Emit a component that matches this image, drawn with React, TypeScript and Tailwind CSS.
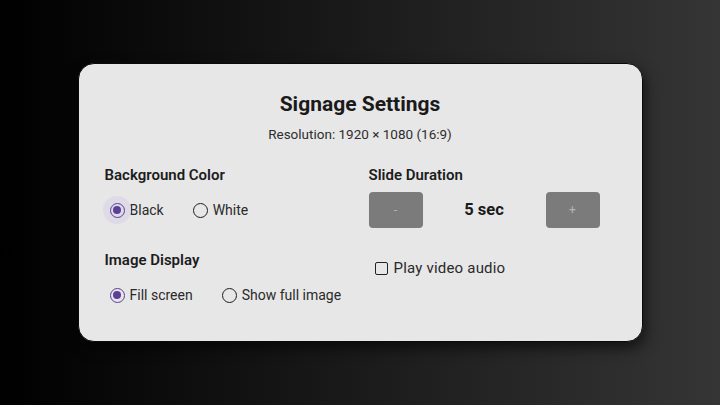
import React from "react";

function Radio({ checked, label, halo }: { checked: boolean; label: string; halo?: boolean }) {
  return (
    <div className="flex items-center">
      <div className="relative flex h-[15px] w-[15px] items-center justify-center">
        {halo && <div className="absolute left-1/2 top-1/2 h-[28px] w-[28px] -translate-x-1/2 -translate-y-1/2 rounded-full bg-[#dedae6]" />}
        <div
          className={
            checked
              ? "relative flex h-[15px] w-[15px] items-center justify-center rounded-full border-[1.5px] border-[#5b3f99]"
              : "relative h-[15px] w-[15px] rounded-full border-[1.5px] border-[#1e1e1e]"
          }
        >
          {checked && <div className="h-[8px] w-[8px] rounded-full bg-[#5b3f99]" />}
        </div>
      </div>
      <span className="ml-[5px] text-[14px] text-[#2a2a2a]">{label}</span>
    </div>
  );
}

export default function App() {
  return (
    <div
      className="flex h-[405px] w-[720px] items-center justify-center bg-[linear-gradient(to_right,#000000,#353535)]"
      style={{ fontFamily: "Roboto, 'Liberation Sans', sans-serif" }}
    >
      <div className="box-border h-[279px] w-[565px] rounded-[16px] border border-[#0a0a0a] bg-[#e7e7e7] px-[26px] pt-[26px] shadow-[2px_6px_14px_rgba(0,0,0,0.6)]">
        <div className="flex flex-col items-center">
          <div className="text-[21px] font-bold leading-[28px] text-[#1a1a1a]">Signage Settings</div>
          <div className="mt-[6px] text-[13.5px] leading-[20px] text-[#2e2e2e]">Resolution: 1920 × 1080 (16:9)</div>
        </div>
        <div className="mt-[21px] grid grid-cols-[264px_231px] gap-y-[22px]">
          <div className="flex flex-col">
            <div className="text-[15px] font-semibold leading-[20px] text-[#1c1c1c]">Background Color</div>
            <div className="mt-[7px] flex h-[36px] items-center pl-[5px]">
              <Radio checked label="Black" halo />
              <div className="ml-[29px]">
                <Radio checked={false} label="White" />
              </div>
            </div>
          </div>
          <div className="flex flex-col">
            <div className="text-[15px] font-semibold leading-[20px] text-[#1c1c1c]">Slide Duration</div>
            <div className="mt-[7px] flex h-[36px] items-center justify-between">
              <div className="flex h-[36px] w-[54px] items-center justify-center rounded-[4px] bg-[#7b7b7b] text-[12px] text-[#b4b4b4]">-</div>
              <div className="text-[16.5px] font-bold text-[#1a1a1a]">5 sec</div>
              <div className="flex h-[36px] w-[54px] items-center justify-center rounded-[4px] bg-[#7b7b7b] text-[12px] text-[#b4b4b4]">+</div>
            </div>
          </div>
          <div className="flex flex-col">
            <div className="text-[15px] font-semibold leading-[20px] text-[#1c1c1c]">Image Display</div>
            <div className="mt-[7px] flex h-[36px] items-center pl-[5px]">
              <Radio checked label="Fill screen" />
              <div className="ml-[29px]">
                <Radio checked={false} label="Show full image" />
              </div>
            </div>
          </div>
          <div className="flex flex-col">
            <div className="mt-[8px] flex h-[20px] items-center pl-[6px]">
              <div className="h-[13px] w-[13px] rounded-[2px] border-[1.5px] border-[#222]" />
              <span className="ml-[6px] text-[15px] tracking-[0.2px] text-[#2a2a2a]">Play video audio</span>
            </div>
          </div>
        </div>
      </div>
    </div>
  );
}
